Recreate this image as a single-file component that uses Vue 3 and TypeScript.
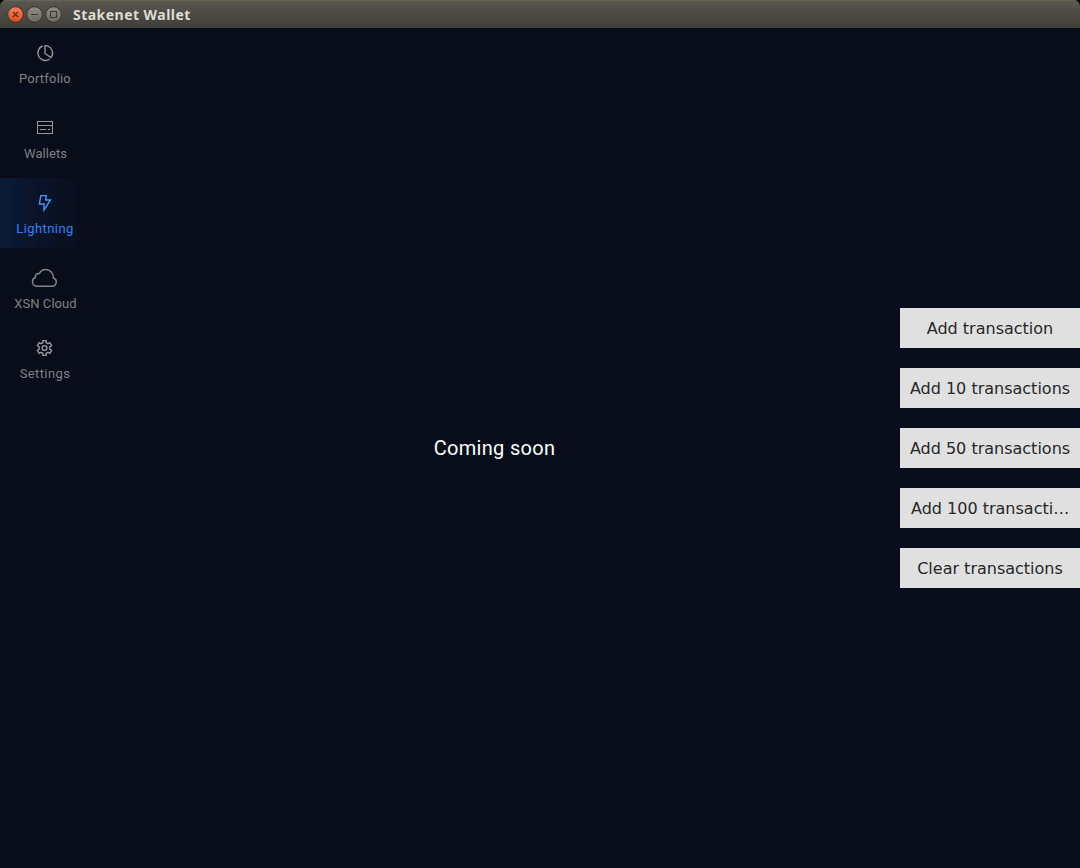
<script setup lang="ts">
interface NavItem {
  id: string
  label: string
}

const items: NavItem[] = [
  { id: 'portfolio', label: 'Portfolio' },
  { id: 'wallets', label: 'Wallets' },
  { id: 'lightning', label: 'Lightning' },
  { id: 'cloud', label: 'XSN Cloud' },
  { id: 'settings', label: 'Settings' },
]
const active = 'lightning'

const actions: string[] = [
  'Add transaction',
  'Add 10 transactions',
  'Add 50 transactions',
  'Add 100 transactions',
  'Clear transactions',
]
</script>

<template>
  <div class="window">
    <header class="titlebar">
      <svg class="controls" width="58" height="20" viewBox="0 0 58 20">
        <defs>
          <linearGradient id="close-fill" x1="0" y1="0" x2="0" y2="1">
            <stop offset="0" stop-color="#f68458" />
            <stop offset="1" stop-color="#df4b1c" />
          </linearGradient>
          <linearGradient id="grey-fill" x1="0" y1="0" x2="0" y2="1">
            <stop offset="0" stop-color="#918e84" />
            <stop offset="1" stop-color="#6b6962" />
          </linearGradient>
        </defs>
        <g stroke="#35342f" stroke-width="1">
          <circle cx="9.5" cy="10.5" r="7.8" fill="url(#close-fill)" />
          <circle cx="28.5" cy="10.5" r="7.8" fill="url(#grey-fill)" />
          <circle cx="47.5" cy="10.5" r="7.8" fill="url(#grey-fill)" />
        </g>
        <g fill="none" stroke="#3c3b37" stroke-width="1.1">
          <path d="M7 8l5 5M12 8l-5 5" stroke="#61230f" />
          <path d="M25 10.5h7" />
          <rect x="44.5" y="7.5" width="6" height="6" />
        </g>
      </svg>
      <span class="title">Stakenet Wallet</span>
    </header>

    <div class="body">
      <nav class="sidebar">
        <a v-for="item in items" :key="item.id" class="item" :class="[item.id, { active: item.id === active }]">
          <svg class="icon" width="30" height="24" viewBox="0 0 30 24" fill="none" stroke="currentColor" stroke-width="1.4">
            <template v-if="item.id === 'portfolio'">
              <path d="M12.700 5A7.500 7.500 0 1 0 19.600 18.200" />
              <path d="M15 4.600v7.900l6 4.100A7.500 7.500 0 0 0 15 4.600z" />
            </template>
            <template v-else-if="item.id === 'wallets'">
              <rect x="7.5" y="5.5" width="15" height="12" stroke-width="1" />
              <path d="M7.500 9.500h15M10 13.500h6.500M18 13.500h2" stroke-width="1" />
            </template>
            <path v-else-if="item.id === 'lightning'" d="M10.800 4.600h5.400L15.700 9h4.800L14 19V13H9.400z" />
            <path
              v-else-if="item.id === 'cloud'"
              d="M7.400 20.300h14.800a4.300 4.300 0 0 0 1.300-8.300C23.500 6.800 19.600 3.400 15.600 3.400c-3.200 0-5.200 1.800-6.200 4.100-2.700-.5-4.400 1.500-4 4C3.200 12.300 2.500 14 2.500 15.700 2.500 18.300 4.500 20.300 7.400 20.300z"
              stroke-width="1.5"
            />
            <template v-else>
              <path
                d="M12.900 4.600h3.200v2.100l1.900 1 1.900-1 1.700 2.900-1.800 1.200v2.400l1.800 1.200-1.700 2.900-1.900-1-1.900 1v2.100h-3.200v-2.100l-1.900-1-1.900 1-1.700-2.900 1.800-1.200v-2.400L7.400 9.600l1.700-2.900 1.900 1 1.900-1z"
              />
              <circle cx="14.5" cy="12" r="2.4" />
            </template>
          </svg>
          <span class="label">{{ item.label }}</span>
        </a>
      </nav>

      <main class="content"><span class="message">Coming soon</span></main>

      <aside class="actions">
        <button v-for="action in actions" :key="action" class="action" type="button">{{ action }}</button>
      </aside>
    </div>
  </div>
</template>

<style>
body {
  margin: 0;
  background: #000;
}
</style>

<style scoped>
.window {
  display: flex;
  flex-direction: column;
  width: 1080px;
  height: 868px;
  overflow: hidden;
  border-radius: 6px 6px 0 0;
  background: #090d1b;
}
.titlebar {
  display: flex;
  align-items: center;
  box-sizing: border-box;
  height: 28px;
  padding-left: 6px;
  background: linear-gradient(#5b5850, #3f3e39);
  box-shadow: inset 0 1px #66635a;
}
.controls {
  flex: none;
}
.title {
  margin-top: 1px;
  margin-left: 9px;
  color: #dfdbd2;
  font: 700 14px/20px "Noto Sans", sans-serif;
  letter-spacing: 0.47px;
}
.body {
  display: flex;
  flex: 1;
}
.sidebar {
  display: flex;
  flex-direction: column;
  gap: 5px;
  width: 90px;
}
.item {
  display: flex;
  flex-direction: column;
  align-items: center;
  box-sizing: border-box;
  height: 70px;
  padding-top: 13px;
  color: #808080;
}
.settings {
  margin-top: -5px;
}
.active {
  color: #2f80ff;
  background: linear-gradient(90deg, #0b1a35, #090d1b 95%);
}
.icon {
  flex: none;
  color: #969696;
}
.cloud .icon {
  color: #858585;
}
.active .icon {
  color: #4a93fb;
}
.label {
  margin-top: 5px;
  font: 13px/18px Roboto, sans-serif;
  letter-spacing: 0.2px;
  white-space: nowrap;
}
.wallets .label,
.cloud .label {
  letter-spacing: 0.06px;
  padding-left: 1px;
}
.lightning .label {
  letter-spacing: 0.42px;
}
.settings .label {
  letter-spacing: 0.38px;
}
.content {
  display: flex;
  flex: 1;
  align-items: center;
  justify-content: center;
}
.message {
  margin-right: 1px;
  color: #fff;
  font: 20px/24px Roboto, sans-serif;
  letter-spacing: 0.3px;
}
.actions {
  display: flex;
  flex-direction: column;
  justify-content: center;
  gap: 20px;
  width: 180px;
}
.action {
  height: 40px;
  padding: 1px 9px 0;
  border: 0;
  overflow: hidden;
  background: #e0e0e0;
  color: #26282a;
  font: 16px/39px "DejaVu Sans", sans-serif;
  text-align: center;
  text-overflow: ellipsis;
  white-space: nowrap;
}
.action:nth-child(4) {
  padding-left: 11px;
  padding-right: 7px;
}
</style>
